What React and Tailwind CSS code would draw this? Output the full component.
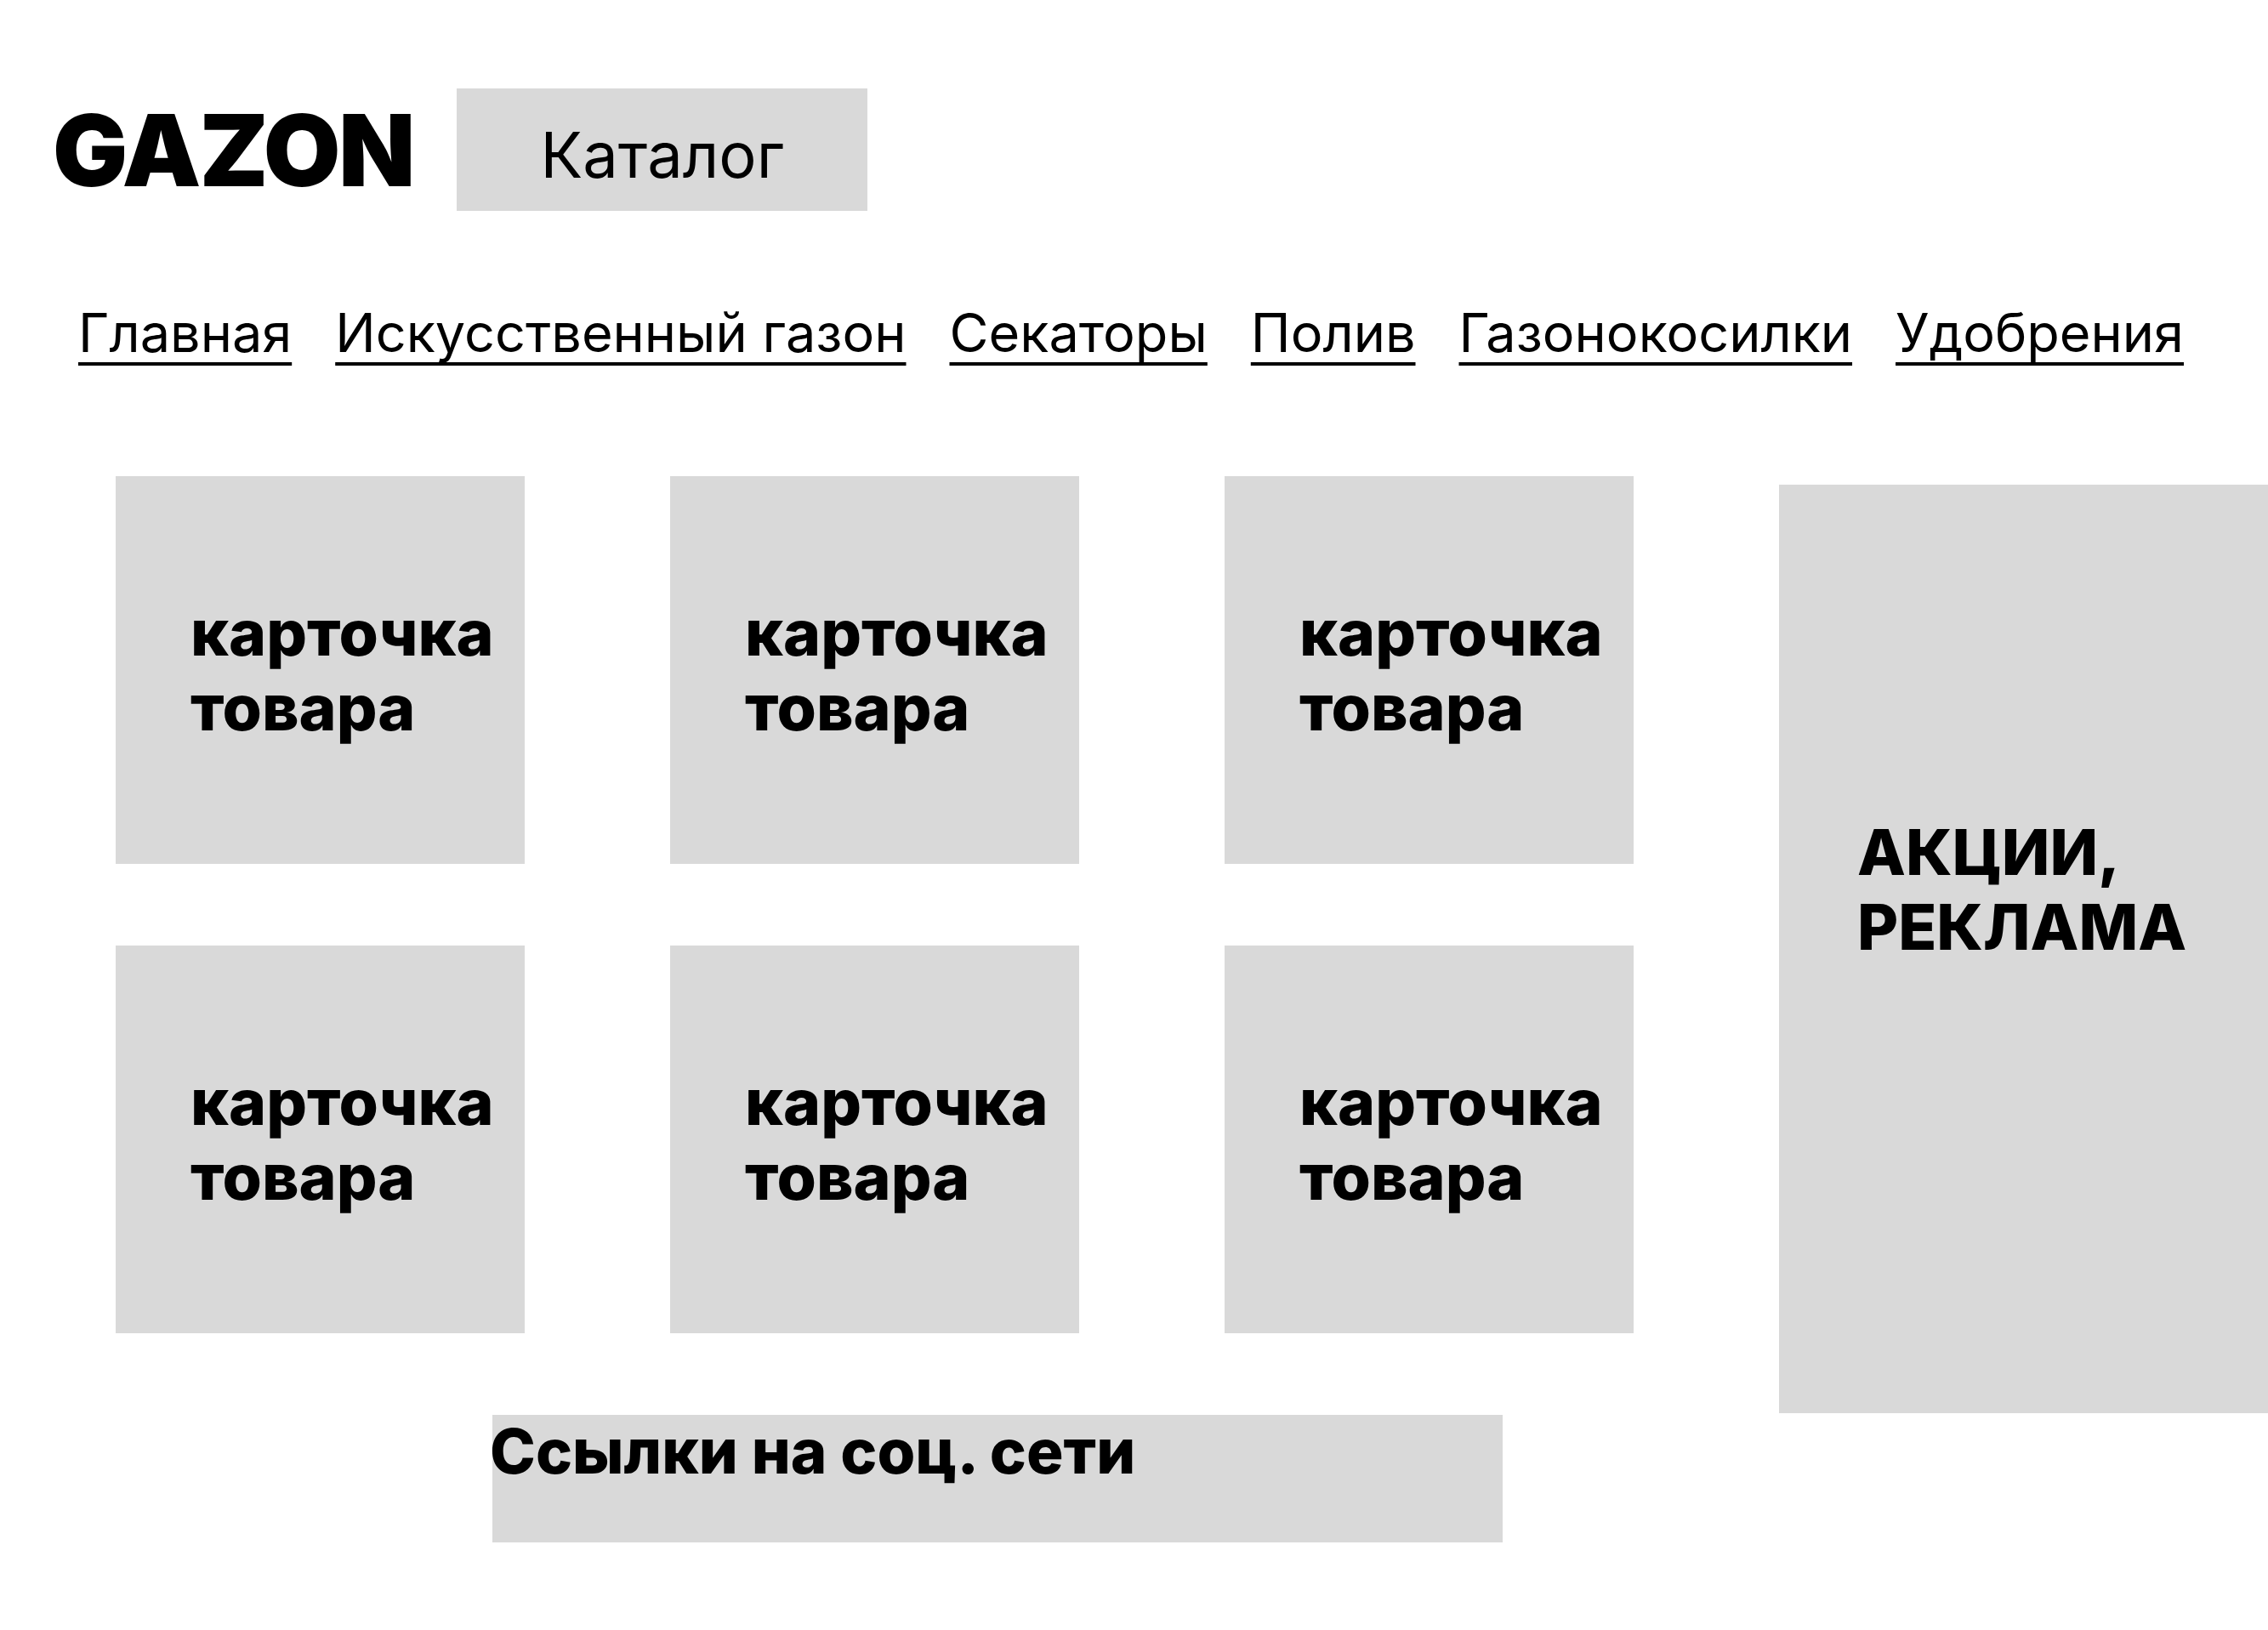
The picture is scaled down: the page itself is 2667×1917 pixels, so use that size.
const navLinks = ['Главная', 'Искусственный газон', 'Секаторы', 'Полив', 'Газонокосилки', 'Удобрения'];

const ProductCard = () => (
  <div className="w-[481px] h-[456px] bg-[#d9d9d9] flex items-center pl-[88px]">
    <p className="text-[75px] leading-[88px] font-extrabold text-black">
      карточка
      <br />
      товара
    </p>
  </div>
);

export default function App() {
  return (
    <div className="w-full min-h-[1917px] bg-white overflow-hidden font-['Inter',sans-serif] text-black">
      {/* шапка */}
      <header className="flex items-center pt-[104px] pl-[62px]">
        <h1 className="text-[117px] leading-none font-black tracking-[-0.018em]">GAZON</h1>
        <button className="ml-[51px] w-[483px] h-[144px] bg-[#d9d9d9] flex items-center justify-center pt-[11px]">
          <span className="text-[74px] leading-none font-normal">Каталог</span>
        </button>
      </header>

      {/* меню */}
      <nav className="flex gap-[51px] pl-[92px] mt-[112px]">
        {navLinks.map((link) => (
          <a
            key={link}
            href="#"
            className="text-[63px] leading-none underline decoration-[4px] underline-offset-[12px] [text-decoration-skip-ink:none]"
          >
            {link}
          </a>
        ))}
      </nav>

      {/* товары и реклама */}
      <div className="flex items-start mt-[137px] pl-[136px]">
        <div className="grid grid-cols-3 gap-x-[171px] gap-y-[96px] shrink-0">
          {Array.from({ length: 6 }).map((_, i) => (
            <ProductCard key={i} />
          ))}
        </div>
        <aside className="ml-[171px] mt-[10px] w-[600px] h-[1092px] shrink-0 bg-[#d9d9d9] pl-[92px] pt-[388px]">
          <p className="text-[74px] leading-[88px] font-extrabold">
            АКЦИИ,
            <br />
            РЕКЛАМА
          </p>
        </aside>
      </div>

      {/* соцсети */}
      <footer className="ml-[579px] mt-[2px] w-[1188px] h-[150px] bg-[#d9d9d9] pt-[7px]">
        <p className="text-[72.5px] leading-none font-extrabold -ml-[3px]">Ссылки на соц. сети</p>
      </footer>
    </div>
  );
}
